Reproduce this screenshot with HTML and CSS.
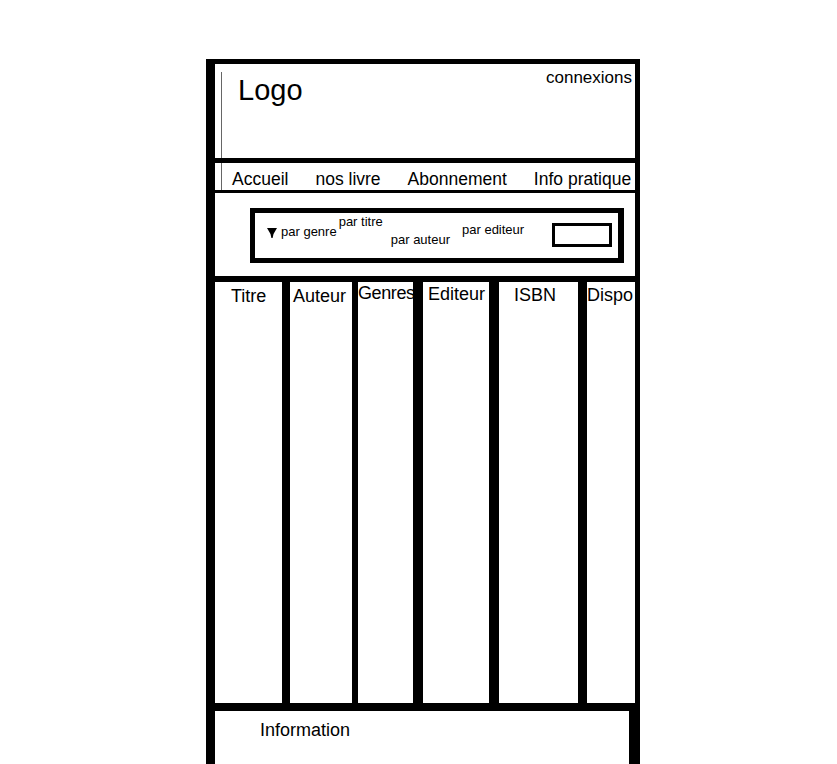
FILE: index.html
```html
<!DOCTYPE html>
<html lang="fr">
<head>
    <meta charset="UTF-8">
    <meta name="viewport" content="width=device-width, initial-scale=1.0">
    <title>Bibliothèque - maquette</title>
    <link rel="stylesheet" href="styles.css">
</head>
<body>
    <div class="frame">
        <header class="header">
            <div class="brand">Logo</div>
            <a class="login" href="#">connexions</a>
        </header>

        <nav class="nav">
            <div class="nav-inner">
                <a href="#">Accueil</a>
                <a href="#">nos livre</a>
                <a href="#">Abonnement</a>
                <a href="#">Info pratique</a>
            </div>
        </nav>

        <section class="filters">
            <div class="filter-box">
                <svg class="funnel" width="10" height="10" viewBox="0 0 10 10">
                    <polygon points="0,0 10,0 6.5,6 5.6,10 4.4,10 3.5,6" fill="#000"/>
                </svg>
                <span class="filter f-genre">par genre</span>
                <span class="filter f-titre">par titre</span>
                <span class="filter f-auteur">par auteur</span>
                <span class="filter f-editeur">par editeur</span>
                <input class="search" type="text">
            </div>
        </section>

        <div class="table">
            <div class="col col-titre">Titre</div>
            <div class="col col-auteur">Auteur</div>
            <div class="col col-genres">Genres</div>
            <div class="col col-editeur">Editeur</div>
            <div class="col col-isbn">ISBN</div>
            <div class="col col-dispo">Dispo</div>
        </div>

        <footer class="footer">Information</footer>
    </div>
</body>
</html>
```

FILE: styles.css
```css
body {
    margin: 59px 0 0 206px;
    font-family: "Liberation Sans", Arial, sans-serif;
    color: #000;
    background: #fff;
}

a {
    color: #000;
    text-decoration: none;
}

.frame {
    width: 420px;
    border-top: 5px solid #000;
    border-left: 9px solid #000;
    border-right: 5px solid #000;
}

/* header */
.header {
    display: flex;
    justify-content: space-between;
    height: 94px;
    padding-left: 6px;
    border-bottom: 5px solid #000;
}

.brand {
    margin-top: 8px;
    padding: 4px 0 0 16px;
    border-left: 1px solid #666;
    font-size: 29px;
    line-height: 1;
}

.login {
    padding: 5px 3px 0 0;
    font-size: 17px;
    line-height: 1;
}

/* menu */
.nav {
    height: 27px;
    padding-left: 6px;
    border-bottom: 3px solid #000;
    overflow: hidden;
}

.nav-inner {
    display: flex;
    gap: 27px;
    height: 21px;
    padding: 6px 0 0 10px;
    border-left: 1px solid #666;
    font-size: 17.5px;
    line-height: 20px;
    white-space: nowrap;
}

/* recherche */
.filters {
    height: 83px;
    box-sizing: border-box;
    padding: 15px 11px 0 35px;
}

.filter-box {
    display: flex;
    align-items: flex-start;
    height: 45px;
    border: 5px solid #000;
    border-right-width: 6px;
    font-size: 13px;
    line-height: 15px;
    white-space: nowrap;
}

.funnel {
    margin: 15px 0 0 12px;
    flex-shrink: 0;
}

.f-genre { margin: 11px 0 0 4px; }
.f-titre { margin: 1px 0 0 2px; }
.f-auteur { margin: 19px 0 0 8px; }
.f-editeur { margin: 9px 0 0 12px; }

.search {
    width: 54px;
    height: 18px;
    margin: 10px 0 0 28px;
    padding: 0;
    border: 3px solid #000;
    box-sizing: content-box;
}

/* tableau */
.table {
    display: grid;
    grid-template-columns: 67px 70px 61px 76px 89px 57px;
    height: 421px;
    border-top: 6px solid #000;
    font-size: 18px;
    line-height: 1.2;
}

.col {
    overflow: hidden;
    white-space: nowrap;
}

.col-titre { padding: 4px 0 0 16px; }
.col-auteur { padding: 4px 0 0 3px; border-left: 8px solid #000; }
.col-genres { padding: 1px 0 0 0; border-left: 6px solid #000; letter-spacing: -0.4px; }
.col-editeur { padding: 2px 0 0 5px; border-left: 10px solid #000; }
.col-isbn { padding: 3px 0 0 15px; border-left: 10px solid #000; }
.col-dispo { padding: 3px 0 0 0; border-left: 9px solid #000; }

/* pied de page */
.footer {
    height: 44px;
    margin-right: -4px;
    padding: 9px 0 0 45px;
    border-top: 8px solid #000;
    border-right: 10px solid #000;
    font-size: 18px;
    line-height: 1.2;
}
```
